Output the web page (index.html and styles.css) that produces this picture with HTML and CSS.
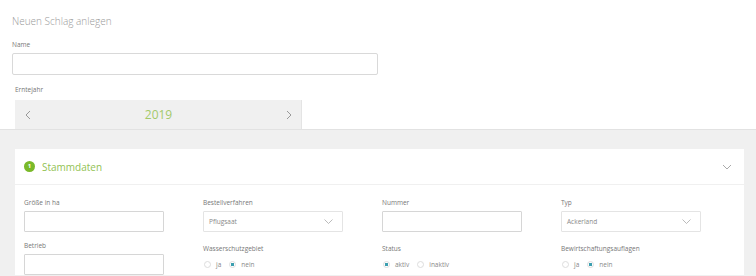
FILE: index.html
```html
<!DOCTYPE html>
<html lang="de">
<head>
  <meta charset="UTF-8" />
  <title>Neuen Schlag anlegen</title>
  <link rel="stylesheet" href="styles.css">
</head>
<body>
  <div class="top">
    <h1>Neuen Schlag anlegen</h1>
    <label class="field-label">Name</label>
    <input class="name-input" type="text">
    <label class="field-label year-label">Erntejahr</label>
    <div class="year-tab">
      <svg class="arrow" width="6" height="10" viewBox="0 0 6 10"><path d="M5 1 L1 5 L5 9" fill="none" stroke="#999" stroke-width="1"/></svg>
      <span class="year">2019</span>
      <svg class="arrow" width="6" height="10" viewBox="0 0 6 10"><path d="M1 1 L5 5 L1 9" fill="none" stroke="#999" stroke-width="1"/></svg>
    </div>
  </div>

  <div class="content">
    <div class="card">
      <div class="card-head">
        <span class="step-num">1</span>
        <span class="card-title">Stammdaten</span>
        <svg class="collapse" width="10" height="6" viewBox="0 0 10 6"><path d="M1 1 L5 5 L9 1" fill="none" stroke="#aaa" stroke-width="1"/></svg>
      </div>
      <div class="card-body">
        <div class="field">
          <label class="field-label">Größe in ha</label>
          <div class="box"></div>
        </div>
        <div class="field">
          <label class="field-label">Bestellverfahren</label>
          <div class="box select">Pflugsaat<svg width="9" height="5" viewBox="0 0 9 5"><path d="M0.5 0.5 L4.5 4.5 L8.5 0.5" fill="none" stroke="#aaa" stroke-width="0.8"/></svg></div>
        </div>
        <div class="field">
          <label class="field-label">Nummer</label>
          <div class="box"></div>
        </div>
        <div class="field">
          <label class="field-label">Typ</label>
          <div class="box select">Ackerland<svg width="9" height="5" viewBox="0 0 9 5"><path d="M0.5 0.5 L4.5 4.5 L8.5 0.5" fill="none" stroke="#aaa" stroke-width="0.8"/></svg></div>
        </div>

        <div class="field">
          <label class="field-label">Betrieb</label>
          <div class="box"></div>
        </div>
        <div class="field low">
          <label class="field-label">Wasserschutzgebiet</label>
          <div class="radios"><span class="radio"></span><span class="opt">ja</span><span class="radio on"></span><span class="opt">nein</span></div>
        </div>
        <div class="field low">
          <label class="field-label">Status</label>
          <div class="radios"><span class="radio on"></span><span class="opt">aktiv</span><span class="radio"></span><span class="opt">inaktiv</span></div>
        </div>
        <div class="field low">
          <label class="field-label">Bewirtschaftungsauflagen</label>
          <div class="radios"><span class="radio"></span><span class="opt">ja</span><span class="radio on"></span><span class="opt">nein</span></div>
        </div>
      </div>
    </div>
  </div>
</body>
</html>
```
FILE: styles.css
```css
body {
  margin: 0;
  font-family: 'Open Sans', sans-serif;
  color: #777;
  background: #fff;
  height: 100vh;
  overflow: hidden;
}
.top {
  padding: 13px 0 0 12px;
}
h1 {
  margin: 0;
  font-size: 10px;
  font-weight: 300;
  color: #999;
  line-height: 16px;
}
.field-label {
  display: block;
  font-size: 6.5px;
  color: #777;
  line-height: 10px;
}
.top .field-label {
  margin-top: 11px;
}
.name-input {
  display: block;
  box-sizing: border-box;
  width: 366px;
  height: 22px;
  margin: 3px 0 0;
  border: 1px solid #d9d9d9;
  border-radius: 2px;
  outline: none;
}
.top .year-label {
  margin: 10px 0 0 3px;
}
.year-tab {
  box-sizing: border-box;
  width: 287px;
  height: 29px;
  margin: 5px 0 0 3px;
  padding: 0 9px 0 10px;
  background: #f0f0f0;
  display: flex;
  align-items: center;
  justify-content: space-between;
  border-right: 1px solid #e4e4e4;
}
.year {
  font-size: 12px;
  color: #a3c96a;
}
.content {
  background: #f0f0f0;
  border-top: 1px solid #e2e2e2;
  padding: 19px 12px 0 15px;
  height: 200px;
}
.card {
  background: #fff;
  width: 729px;
}
.card-head {
  display: flex;
  align-items: center;
  height: 35px;
  padding: 0 12px 0 9px;
  border-bottom: 1px solid #f0f0f0;
}
.step-num {
  width: 11px;
  height: 11px;
  border-radius: 50%;
  background: #7ab929;
  color: #fff;
  font-size: 6px;
  font-weight: 700;
  text-align: center;
  line-height: 11px;
}
.card-title {
  margin-left: 7px;
  font-size: 10px;
  color: #92c253;
  flex: 1;
}
.card-body {
  display: grid;
  grid-template-columns: repeat(4, 179px);
  padding: 13px 0 0 9px;
  row-gap: 9px;
}
.card-body .field-label {
  margin-bottom: 3px;
}
.box {
  box-sizing: border-box;
  width: 140px;
  height: 21px;
  border: 1px solid #d6d6d6;
  border-radius: 1px;
}
.select {
  border-color: #e4e4e4;
  display: flex;
  align-items: center;
  justify-content: space-between;
  padding: 0 9px 0 5px;
  font-size: 6.5px;
  color: #888;
}
.field.low {
  padding-top: 3px;
}
.radios {
  display: flex;
  align-items: center;
  font-size: 6.5px;
  color: #888;
  margin-top: 6px;
}
.radio {
  box-sizing: border-box;
  width: 7px;
  height: 7px;
  border: 1px solid #ddd;
  border-radius: 50%;
  margin: 0 5px 0 8px;
}
.radios .radio:first-child {
  margin-left: 1px;
}
.radio.on {
  background: radial-gradient(circle, #3c9fb0 0 1.6px, #fff 2px);
}
```
